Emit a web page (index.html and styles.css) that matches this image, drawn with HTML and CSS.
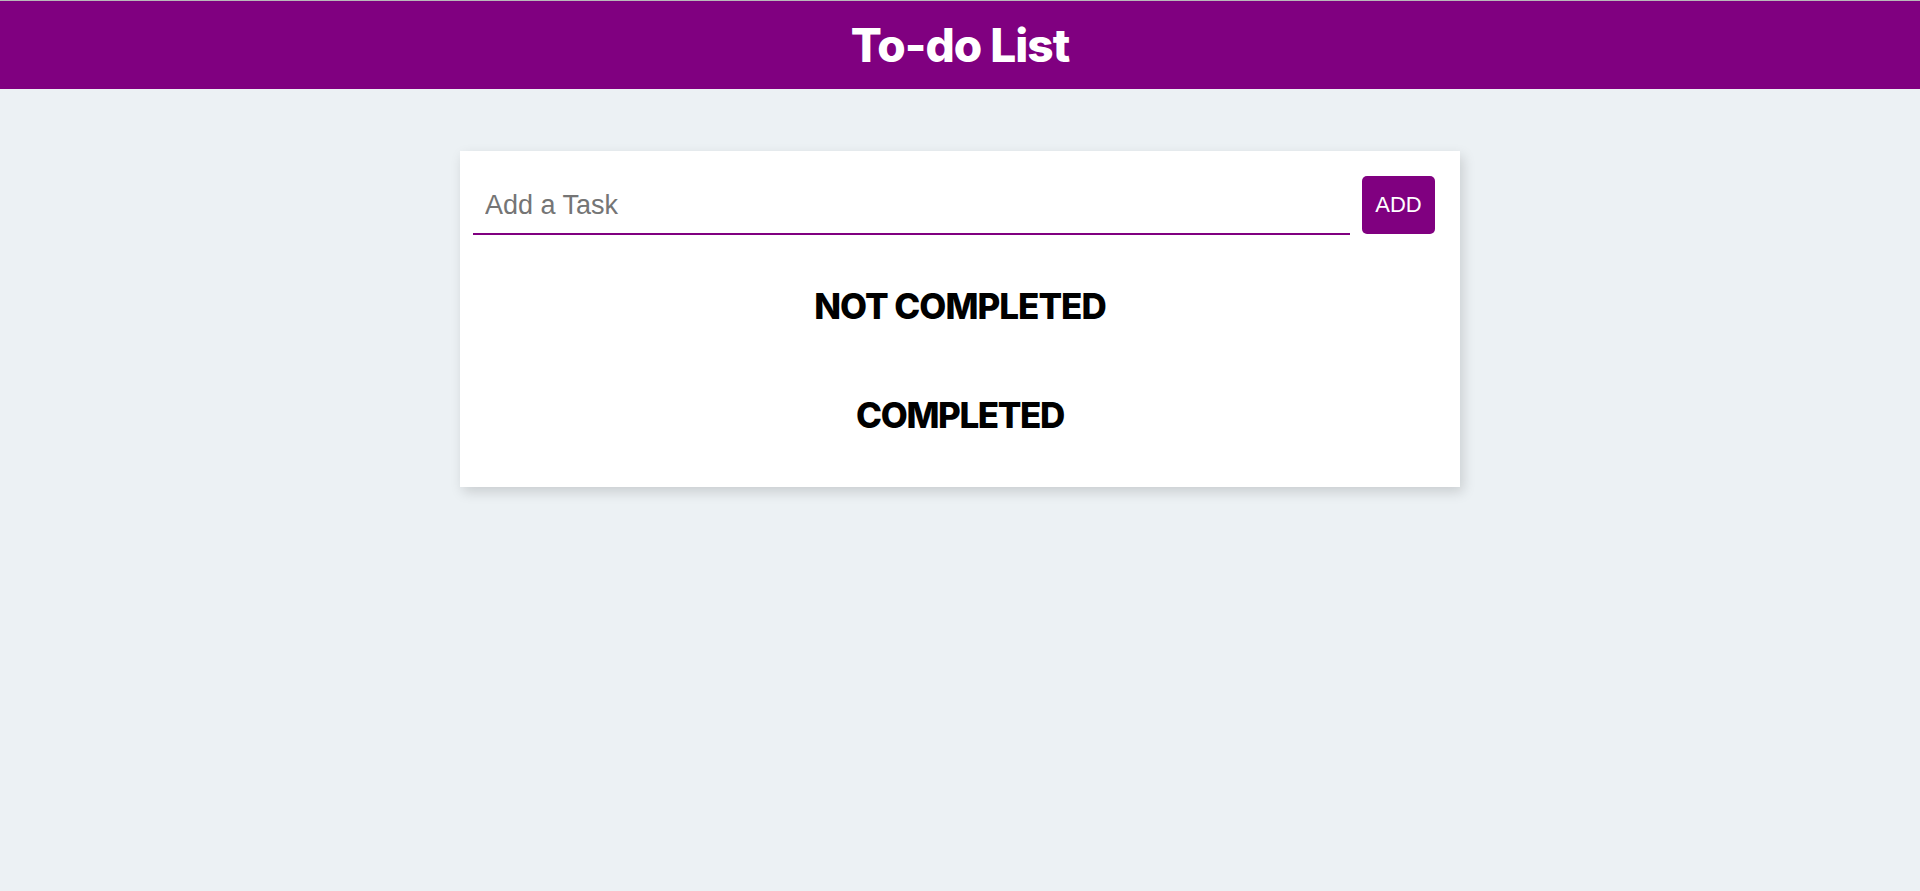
FILE: index.html
```html
<!DOCTYPE html>
<html lang="en">
<head>
<meta charset="utf-8">
<title>To-do List</title>
<link rel="stylesheet" href="styles.css">
</head>
<body>
<header class="top-bar">
  <h1 class="title">To-do List</h1>
</header>
<main class="card">
  <div class="add-row">
    <input class="task-input" type="text" placeholder="Add a Task">
    <button class="add-btn">ADD</button>
  </div>
  <h2 class="section-title first">NOT COMPLETED</h2>
  <ul class="task-list"></ul>
  <h2 class="section-title second">COMPLETED</h2>
  <ul class="task-list"></ul>
</main>
</body>
</html>
```
FILE: styles.css
```css
* { box-sizing: border-box; }
html, body { margin: 0; padding: 0; }
body {
  background: #ecf1f4;
  font-family: "Liberation Sans", Arial, sans-serif;
  min-height: 891px;
}
.top-bar {
  background: #800080;
  border-top: 1px solid #b9b9b9;
  height: 89px;
  display: flex;
  align-items: center;
  justify-content: center;
}
.title {
  margin: 0;
  color: #fff;
  font-family: Inter, "Noto Sans", sans-serif;
  font-weight: 800;
  font-size: 46px;
  line-height: 1;
  letter-spacing: -1px;
}
.card {
  width: 1000px;
  margin: 62px auto 0;
  background: #fff;
  box-shadow: 3px 5px 12px rgba(0, 0, 0, 0.15);
  padding: 25px 13px 51px 13px;
  display: flex;
  flex-direction: column;
}
.add-row {
  display: flex;
  gap: 12px;
  align-items: stretch;
  padding-right: 12px;
}
.task-input {
  flex: 1;
  height: 59px;
  border: none;
  border-bottom: 2px solid #800080;
  outline: none;
  padding: 2px 12px 0;
  font-family: "Liberation Sans", Arial, sans-serif;
  font-size: 27px;
  color: #333;
  background: transparent;
}
.task-input::placeholder { color: #757575; }
.add-btn {
  width: 73px;
  height: 58px;
  border: none;
  border-radius: 5px;
  background: #800080;
  color: #fff;
  font-family: "Liberation Sans", Arial, sans-serif;
  font-size: 22px;
  padding: 0;
}
.section-title {
  margin: 0;
  text-align: center;
  font-family: Inter, "Noto Sans", sans-serif;
  font-weight: 800;
  font-size: 35px;
  line-height: 42px;
  color: #000;
}
.section-title.first { margin-top: 50px; letter-spacing: -1px; }
.section-title.second { margin-top: 67px; letter-spacing: -1.4px; }
.task-list { margin: 0; padding: 0; list-style: none; }
```
